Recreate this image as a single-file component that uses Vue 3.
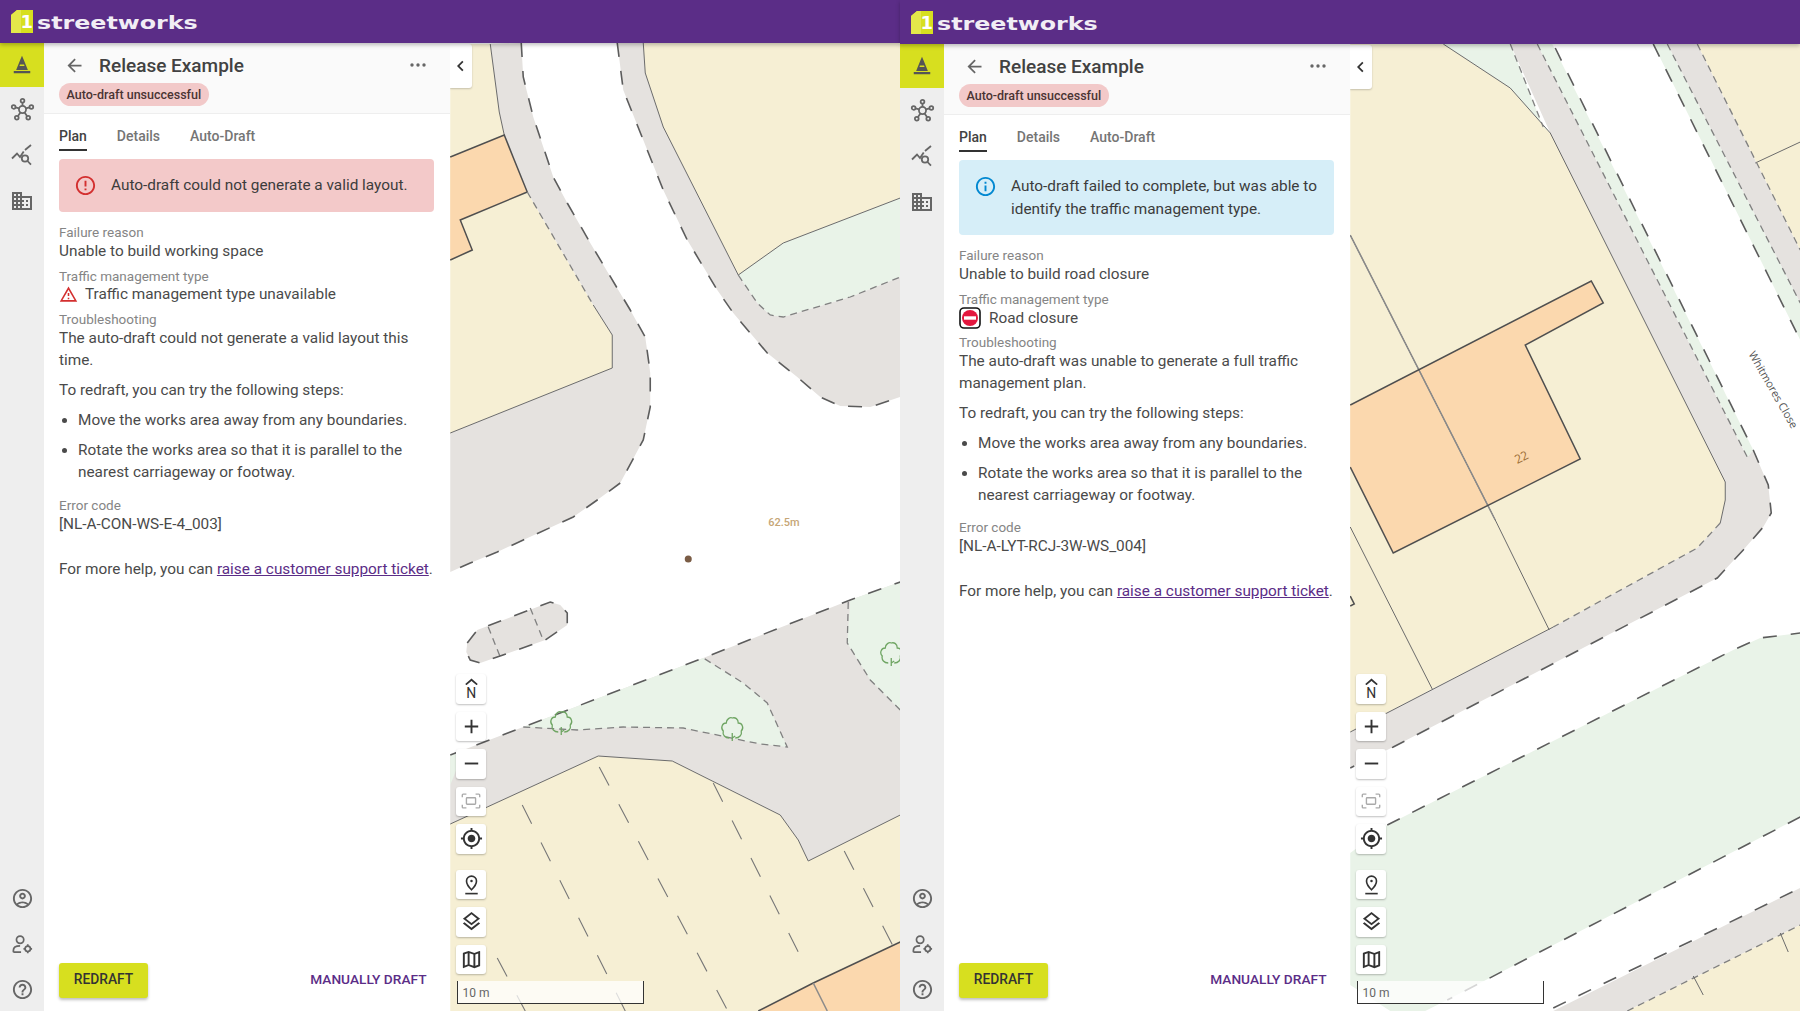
<script setup>
const LAND = 'land'
const ROAD = 'foot'
const GREEN = 'green'
const BUILDING = 'building'

const treeMarks = [[561, 723], [732, 729], [891, 654]]

const maps = {
  a: {
    viewBox: '450 43 450 968',
    fills: [
      [LAND, '450,44 490,44 499,112 504,135 514,160 527,192 593,305 612,335 612,368 450,433'],
      [BUILDING, '450,157 504,135 514,160 527,192 460,220 472,250 450,260'],
      [ROAD, '490,44 521,43 523,77 533,117 553,177 567,203 590,243 630,310 645,337 650,373 650,407 643,440 620,483 597,500 573,517 560,523 523,540 497,552 470,563 450,572 450,433 612,368 612,335 593,305 527,192 514,160 504,135 499,112'],
      [LAND, '643,43 900,43 900,198 783,243 738,275 663,127 645,73'],
      [GREEN, '738,275 783,243 900,198 900,277 850,297 783,317 770,315 757,303'],
      [ROAD, '617,43 643,43 645,73 663,127 738,275 757,303 770,315 783,317 850,297 900,277 900,397 870,407 840,406 820,397 797,377 767,353 750,333 733,313 717,290 687,240 663,190 643,140 623,90'],
      [ROAD, '467,643 477,630 550,602 560,605 567,613 567,625 545,640 480,663 470,660 466,652'],
      [ROAD, '450,755 523,727 703,658 850,600 900,582 900,815 808,861 798,840 780,815 672,761 598,756 487,807 450,824'],
      [GREEN, '450,755 464,750 450,785'],
      [GREEN, '523,727 703,658 743,683 767,703 787,747 760,744 683,728 623,727 577,730'],
      [GREEN, '850,600 900,582 900,710 870,680 847,643'],
      [LAND, '450,824 487,807 598,756 672,761 780,815 798,840 808,861 900,815 900,1011 450,1011'],
      [BUILDING, '758,1011 813,983 900,942 900,1011']
    ],
    lines: [
      ['edge', '490,44 499,112 504,135'],
      ['edge', '593,305 612,335 612,368 450,433'],
      ['edge', '643,43 645,73 663,127 738,275 783,243 900,198'],
      ['edge', '450,824 487,807 598,756 672,761 780,815 798,840 808,861 900,815'],
      ['wall', '450,157 504,135 514,160 527,192 460,220 472,250 450,260'],
      ['wall', '758,1011 813,983 900,942'],
      ['soft', '527,192 593,305'],
      ['soft', '738,275 757,303 770,315 783,317 850,297 900,277'],
      ['soft', '523,727 577,730 623,727 683,728 760,744 787,747 767,703 743,683 703,658'],
      ['soft', '848,602 847,643 870,680 900,710'],
      ['soft', '488,627 500,657'],
      ['soft', '530,608 543,640'],
      ['kerb', '521,43 523,77 533,117 553,177 567,203 590,243 630,310 645,337 650,373 650,407 643,440 620,483 597,500 573,517 560,523 523,540 497,552 470,563 450,572'],
      ['kerb', '617,43 623,90 643,140 663,190 687,240 717,290 733,313 750,333 767,353 797,377 820,397 840,406 870,407 900,397'],
      ['kerb', '467,643 477,630 550,602 560,605 567,613 567,625 545,640 480,663 470,660 466,652 467,643'],
      ['kerb', '450,755 523,727 703,658 850,600 900,582'],
      ['plot', '599,767 727,1010'],
      ['plot', '522,805 625,1011'],
      ['plot', '713,783 804,964'],
      ['plot', '844,851 900,960'],
      ['plot', '497,958 525,1011'],
      ['party', '813,983 827,1011']
    ],
    labels: [{ text: '62.5m', x: 768, y: 526, cls: 'dist' }],
    dot: [688, 559],
    trees: treeMarks
  },
  b: {
    viewBox: '1350 44 450 967',
    fills: [
      [LAND, '1350,44 1443,44 1510,88 1550,133 1725,482 1725,500 1720,523 1697,548 1553,627 1432,689 1350,732'],
      [GREEN, '1443,44 1510,44 1543,127 1550,133 1510,88'],
      [ROAD, '1510,44 1537,44 1747,457 1753,450 1768,485 1771,513 1763,527 1743,550 1717,578 1393,747 1350,768 1350,732 1432,689 1553,627 1697,548 1720,523 1725,500 1725,482 1550,133'],
      [GREEN, '1537,44 1552,44 1753,450 1747,457'],
      [GREEN, '1653,44 1667,44 1800,303 1800,340'],
      [ROAD, '1667,44 1697,44 1800,250 1800,303'],
      [LAND, '1697,44 1800,44 1800,250'],
      [BUILDING, '1350,405 1591,281 1603,303 1525,345 1580,459 1393,553 1350,467'],
      [GREEN, '1350,853 1387,825 1733,650 1760,638 1800,633 1800,817 1447,1000 1425,1011 1390,1011 1350,985'],
      [ROAD, '1553,1011 1800,888 1800,925 1627,1011'],
      [LAND, '1627,1011 1800,925 1800,1011']
    ],
    lines: [
      ['edge', '1443,44 1510,88 1550,133 1725,482 1725,500 1720,523'],
      ['edge', '1553,627 1350,732'],
      ['edge', '1755,163 1800,142'],
      ['edge', '1350,235 1495,520 1549,630'],
      ['edge', '1350,527 1432,689'],
      ['party', '1350,235 1495,520'],
      ['wall', '1350,405 1591,281 1603,303 1525,345 1580,459 1393,553 1350,467'],
      ['wall', '1350,596 1354,604 1350,606'],
      ['soft', '1510,44 1543,127'],
      ['soft', '1537,44 1747,457'],
      ['soft', '1667,44 1800,303'],
      ['soft', '1697,44 1800,250'],
      ['soft', '1720,523 1697,548 1553,627'],
      ['soft', '1627,1011 1800,925'],
      ['kerb', '1555,48 1753,450 1768,485 1771,513 1763,527 1743,550 1717,578 1393,747 1350,768'],
      ['kerb', '1653,44 1800,340'],
      ['kerb', '1387,825 1733,650 1760,638 1800,633'],
      ['kerb', '1800,817 1447,1000'],
      ['kerb', '1553,1008 1800,888'],
      ['edge', '1693,976 1703,995'],
      ['edge', '1780,933 1788,952']
    ],
    labels: [
      { text: 'Whitmores Close', x: 1748, y: 354, cls: 'street', rotate: 60 },
      { text: '22', x: 1517, y: 464, cls: 'house', rotate: -27 }
    ],
    trees: []
  }
}

const screens = [
  {
    id: 'a',
    alertKind: 'error',
    alert: 'Auto-draft could not generate a valid layout.',
    reason: 'Unable to build working space',
    tmKind: 'warning',
    tmText: 'Traffic management type unavailable',
    trouble: 'The auto-draft could not generate a valid layout this time.',
    code: '[NL-A-CON-WS-E-4_003]',
    map: maps.a
  },
  {
    id: 'b',
    alertKind: 'info',
    alert: 'Auto-draft failed to complete, but was able to identify the traffic management type.',
    reason: 'Unable to build road closure',
    tmKind: 'closure',
    tmText: 'Road closure',
    trouble: 'The auto-draft was unable to generate a full traffic management plan.',
    code: '[NL-A-LYT-RCJ-3W-WS_004]',
    map: maps.b
  }
]

const tabs = ['Plan', 'Details', 'Auto-Draft']
const steps = [
  'Move the works area away from any boundaries.',
  'Rotate the works area so that it is parallel to the nearest carriageway or footway.'
]
</script>

<template>
  <div class="page">
    <section v-for="screen in screens" :key="screen.id" class="screen" :class="'screen-' + screen.id">
      <header class="topbar">
        <div class="logo-mark">
          <svg viewBox="0 0 22 23" width="22" height="23">
            <path d="M0 23V5L6 0h16v23z" fill="#d7df1f" />
            <path d="M0 23V5L6 0h4v23z" fill="#e3e84a" />
          </svg>
          <span class="logo-one">1</span>
        </div>
        <span class="logo-text">streetworks</span>
      </header>

      <div class="body">
        <nav class="sidebar">
          <div class="nav-group">
            <div class="nav-item active">
              <svg viewBox="0 0 24 24" width="22" height="22" fill="#555">
                <path d="M3 18.5h18V21H3zM5.6 17.5 10 6.5 12 2l2 4.5 4.400 11z" />
                <path d="M9.800 11.500h4.400l.6 1.700H9.200z" fill="#d7df1f" />
              </svg>
            </div>
            <div class="nav-item">
              <svg viewBox="0 0 24 24" width="25" height="25" fill="none" stroke="#666" stroke-width="1.7">
                <circle cx="12" cy="12" r="3.4" />
                <circle cx="12" cy="3.5" r="1.8" />
                <circle cx="3.500" cy="9.5" r="1.8" />
                <circle cx="20.500" cy="9.5" r="1.8" />
                <circle cx="6.500" cy="20" r="1.8" />
                <circle cx="17.500" cy="20" r="1.8" />
                <path d="M12 5.300v3.300M5.200 10l3.600 1M18.800 10l-3.600 1M7.500 18.500l2.500-3.600M16.500 18.500 14 14.900" />
              </svg>
            </div>
            <div class="nav-item">
              <svg viewBox="0 0 24 24" width="24" height="24" fill="none" stroke="#666" stroke-width="1.8">
                <path d="M2 15.500 7 10.500l3 3.500 3.700-5.500M15 7l6-5" />
                <circle cx="15" cy="15.500" r="3.2" />
                <path d="m17.500 18 3.500 3.700" />
              </svg>
            </div>
            <div class="nav-item">
              <svg viewBox="0 0 24 24" width="24" height="24" fill="#666">
                <path d="M12 7V3H2v18h20V7H12zM6 19H4v-2h2v2zm0-4H4v-2h2v2zm0-4H4V9h2v2zm0-4H4V5h2v2zm4 12H8v-2h2v2zm0-4H8v-2h2v2zm0-4H8V9h2v2zm0-4H8V5h2v2zm10 12h-8v-2h2v-2h-2v-2h2v-2h-2V9h8v10zm-2-8h-2v2h2v-2zm0 4h-2v2h2v-2z" />
              </svg>
            </div>
          </div>
          <div class="nav-group nav-bottom">
            <div class="nav-item">
              <svg viewBox="0 0 24 24" width="23" height="23" fill="#666">
                <path d="M12 2C6.480 2 2 6.480 2 12s4.480 10 10 10 10-4.480 10-10S17.520 2 12 2zM7.350 18.500C8.660 17.560 10.260 17 12 17s3.340.56 4.650 1.500c-1.310.94-2.910 1.500-4.650 1.500s-3.340-.56-4.650-1.500zm10.790-1.380C16.450 15.800 14.320 15 12 15s-4.450.8-6.140 2.120C4.700 15.730 4 13.950 4 12c0-4.420 3.580-8 8-8s8 3.580 8 8c0 1.950-.7 3.730-1.860 5.120zM12 6c-1.930 0-3.500 1.570-3.500 3.500S10.070 13 12 13s3.500-1.570 3.500-3.500S13.930 6 12 6zm0 5c-.83 0-1.500-.67-1.500-1.500S11.170 8 12 8s1.500.67 1.500 1.500S12.830 11 12 11z" />
              </svg>
            </div>
            <div class="nav-item">
              <svg viewBox="0 0 24 24" width="23" height="23" fill="none" stroke="#666" stroke-width="1.8">
                <circle cx="9.500" cy="7" r="3.8" />
                <path d="M2.500 20v-2c0-3 3-4.500 7-4.500M2.500 20h8" />
                <circle cx="17.500" cy="16.500" r="2.8" />
                <path d="M17.500 11.800v1.900M17.500 19.300v1.900M13 16.500h1.700M20.300 16.500H22" />
              </svg>
            </div>
            <div class="nav-item">
              <svg viewBox="0 0 24 24" width="23" height="23" fill="#666">
                <path d="M11 18h2v-2h-2v2zm1-16C6.480 2 2 6.480 2 12s4.480 10 10 10 10-4.480 10-10S17.520 2 12 2zm0 18c-4.410 0-8-3.590-8-8s3.590-8 8-8 8 3.590 8 8-3.590 8-8 8zm0-14c-2.210 0-4 1.790-4 4h2c0-1.100.9-2 2-2s2 .9 2 2c0 2-3 1.750-3 5h2c0-2.250 3-2.500 3-5 0-2.210-1.790-4-4-4z" />
              </svg>
            </div>
          </div>
        </nav>

        <main class="panel">
          <div class="panel-head">
            <div class="title-row">
              <svg viewBox="0 0 24 24" width="21" height="21" fill="#666">
                <path d="M20 11H7.830l5.590-5.590L12 4l-8 8 8 8 1.410-1.410L7.830 13H20v-2z" />
              </svg>
              <h1>Release Example</h1>
              <svg class="more" viewBox="0 0 16 4" width="16" height="4" fill="#666">
                <circle cx="2" cy="2" r="1.7" />
                <circle cx="8" cy="2" r="1.7" />
                <circle cx="14" cy="2" r="1.7" />
              </svg>
            </div>
            <span class="chip">Auto-draft unsuccessful</span>
          </div>

          <div class="tabs">
            <span v-for="(tab, i) in tabs" :key="tab" class="tab" :class="{ current: i === 0 }">{{ tab }}</span>
          </div>

          <div class="content">
            <div class="alert" :class="'alert-' + screen.alertKind">
              <svg v-if="screen.alertKind === 'error'" viewBox="0 0 24 24" width="23" height="23" fill="#d32f2f">
                <path d="M11 15h2v2h-2zm0-8h2v6h-2zm.99-5C6.470 2 2 6.480 2 12s4.470 10 9.990 10C17.520 22 22 17.520 22 12S17.520 2 11.990 2zM12 20c-4.420 0-8-3.580-8-8s3.580-8 8-8 8 3.580 8 8-3.580 8-8 8z" />
              </svg>
              <svg v-else viewBox="0 0 24 24" width="23" height="23" fill="#0288d1">
                <path d="M11 7h2v2h-2zm0 4h2v6h-2zm1-9C6.480 2 2 6.480 2 12s4.480 10 10 10 10-4.480 10-10S17.520 2 12 2zm0 18c-4.410 0-8-3.590-8-8s3.590-8 8-8 8 3.590 8 8-3.590 8-8 8z" />
              </svg>
              <p>{{ screen.alert }}</p>
            </div>

            <div class="field">
              <div class="label">Failure reason</div>
              <div class="value">{{ screen.reason }}</div>
            </div>
            <div class="field">
              <div class="label">Traffic management type</div>
              <div class="value tm-row" :class="'tm-' + screen.tmKind">
                <svg v-if="screen.tmKind === 'warning'" viewBox="0 0 24 24" width="19" height="19" fill="#d32f2f">
                  <path d="M12 5.990 19.530 19H4.470L12 5.990M12 2 1 21h22L12 2zm1 14h-2v2h2v-2zm0-6h-2v4h2v-4z" />
                </svg>
                <svg v-else class="closure" viewBox="0 0 22 22" width="22" height="22">
                  <rect x="1" y="1" width="20" height="20" rx="4" fill="#fff" stroke="#111" stroke-width="1.6" />
                  <circle cx="11" cy="11" r="8" fill="#e3173e" />
                  <rect x="5" y="9.300" width="12" height="3.4" fill="#fff" />
                </svg>
                <span>{{ screen.tmText }}</span>
              </div>
            </div>
            <div class="field">
              <div class="label">Troubleshooting</div>
              <div class="value body-text trouble">{{ screen.trouble }}</div>
            </div>
            <p class="body-text redraft-intro">To redraft, you can try the following steps:</p>
            <ul class="steps">
              <li v-for="step in steps" :key="step">{{ step }}</li>
            </ul>
            <div class="field error-code">
              <div class="label">Error code</div>
              <div class="value">{{ screen.code }}</div>
            </div>
            <p class="body-text help">For more help, you can <a href="#" @click.prevent>raise a customer support ticket</a>.</p>
          </div>

          <div class="actions">
            <button class="btn-primary">REDRAFT</button>
            <button class="btn-text">MANUALLY DRAFT</button>
          </div>
        </main>

        <div class="map">
          <svg class="map-canvas" :viewBox="screen.map.viewBox">
            <polygon v-for="(f, i) in screen.map.fills" :key="'f' + i" :class="f[0]" :points="f[1]" />
            <polyline v-for="(l, i) in screen.map.lines" :key="'l' + i" :class="l[0]" :points="l[1]" />
            <g v-for="t in screen.map.trees" :key="t[0]" :transform="`translate(${t[0] - 12} ${t[1] - 13})`" class="tree">
              <path d="M9 22C5 22 2 19 3 15 0 12 2 7 6 7 6 3 10 1 12 2 15 1 18 3 18 7 22 7 24 12 21 15 22 19 19 22 15 22M12 25V17M12 22l3-2" />
            </g>
            <circle v-if="screen.map.dot" :cx="screen.map.dot[0]" :cy="screen.map.dot[1]" r="3.5" fill="#7a5c45" />
            <text
              v-for="lab in screen.map.labels"
              :key="lab.text"
              :class="lab.cls"
              :x="lab.x"
              :y="lab.y"
              :transform="lab.rotate ? `rotate(${lab.rotate} ${lab.x} ${lab.y})` : null"
            >{{ lab.text }}</text>
          </svg>

          <button class="collapse">
            <svg viewBox="0 0 24 24" width="22" height="22" fill="#333">
              <path d="M15.410 7.410 14 6l-6 6 6 6 1.410-1.410L10.830 12z" />
            </svg>
          </button>

          <div class="controls">
            <div class="ctrl-group">
              <button class="ctrl north">
                <svg viewBox="0 0 16 8" width="15" height="7" fill="none" stroke="#333" stroke-width="2"><path d="M1.500 7.500 8 2l6.500 5.500" /></svg>
                <span>N</span>
              </button>
              <button class="ctrl">
                <svg viewBox="0 0 24 24" width="23" height="23" fill="#333"><path d="M19 13h-6v6h-2v-6H5v-2h6V5h2v6h6v2z" /></svg>
              </button>
              <button class="ctrl">
                <svg viewBox="0 0 24 24" width="23" height="23" fill="#333"><path d="M19 13H5v-2h14v2z" /></svg>
              </button>
              <button class="ctrl">
                <svg viewBox="0 0 24 24" width="22" height="22" fill="none" stroke="#aaa" stroke-width="1.5">
                  <rect x="7" y="8.500" width="10" height="7" rx=".8" />
                  <path d="M2.500 8V5.500a1 1 0 0 1 1-1H7M17 4.500h3.500a1 1 0 0 1 1 1V8M21.500 16v2.500a1 1 0 0 1-1 1H17M7 19.500H3.500a1 1 0 0 1-1-1V16" />
                </svg>
              </button>
              <button class="ctrl">
                <svg viewBox="0 0 24 24" width="23" height="23" fill="#333">
                  <path d="M12 8c-2.210 0-4 1.790-4 4s1.790 4 4 4 4-1.790 4-4-1.790-4-4-4zm8.940 3c-.46-4.170-3.770-7.480-7.940-7.940V1h-2v2.060C6.830 3.520 3.520 6.830 3.060 11H1v2h2.060c.46 4.170 3.770 7.480 7.940 7.940V23h2v-2.060c4.170-.46 7.480-3.770 7.940-7.940H23v-2h-2.060zM12 19c-3.870 0-7-3.130-7-7s3.130-7 7-7 7 3.130 7 7-3.130 7-7 7z" />
                </svg>
              </button>
            </div>
            <div class="ctrl-group">
              <button class="ctrl">
                <svg viewBox="0 0 24 24" width="23" height="23" fill="none" stroke="#333" stroke-width="1.7">
                  <path d="M12 17.500S6.800 12.600 6.800 8.400a5.200 5.200 0 0 1 10.400 0c0 4.200-5.200 9.100-5.200 9.100z" />
                  <circle cx="12" cy="8.400" r="1.3" fill="#333" stroke="none" />
                  <path d="M5.500 21.500h13" />
                </svg>
              </button>
              <button class="ctrl">
                <svg viewBox="0 0 24 24" width="23" height="23" fill="#333">
                  <path d="m12 18.540-7.370-5.730L3 14.070l9 7 9-7-1.630-1.270zM12 16l7.360-5.730L21 9l-9-7-9 7 1.630 1.270L12 16zm0-11.470L17.740 9 12 13.470 6.260 9 12 4.530z" />
                </svg>
              </button>
              <button class="ctrl">
                <svg viewBox="0 0 24 24" width="23" height="23" fill="#333">
                  <path d="m20.500 3-.16.03L15 5.100 9 3 3.360 4.900c-.21.07-.36.25-.36.480V20.500c0 .28.22.5.5.5l.16-.03L9 18.900l6 2.100 5.640-1.900c.21-.07.36-.25.36-.48V3.500c0-.28-.22-.5-.5-.5zM10 5.470l4 1.400v11.660l-4-1.400V5.470zm-5 .99 3-1.010v11.700l-3 1.160V6.460zm14 11.080-3 1.010V6.860l3-1.160v11.840z" />
                </svg>
              </button>
            </div>
          </div>

          <div class="scale">10 m</div>
        </div>
      </div>
    </section>
  </div>
</template>

<style>
html, body {
  margin: 0;
  padding: 0;
  background: #fff;
}
</style>

<style scoped>
.page {
  display: grid;
  grid-template-columns: 900px 900px;
  width: 1800px;
  height: 1011px;
  overflow: hidden;
  font-family: Roboto, "Liberation Sans", sans-serif;
  color: #424242;
}
.screen {
  display: flex;
  flex-direction: column;
  height: 1011px;
  min-width: 0;
}
.topbar {
  flex: none;
  height: 43px;
  background: #5b2d87;
  display: flex;
  align-items: center;
  padding-left: 11px;
  gap: 4px;
  box-shadow: 0 2px 4px rgba(0, 0, 0, .25);
  position: relative;
  z-index: 3;
}
.screen-b .topbar {
  height: 44px;
}
.logo-mark {
  position: relative;
  width: 22px;
  height: 23px;
}
.logo-mark svg {
  display: block;
}
.logo-one {
  position: absolute;
  right: 0;
  top: 1px;
  font-family: "DejaVu Sans", sans-serif;
  font-weight: 700;
  font-size: 18px;
  line-height: 21px;
  color: #fff;
}
.logo-text {
  font-family: "DejaVu Sans", sans-serif;
  font-weight: 700;
  font-size: 18px;
  color: #f1edf5;
  transform: scaleX(1.32);
  transform-origin: left center;
  margin-top: 2px;
}
.body {
  flex: 1;
  display: flex;
  min-height: 0;
}
.sidebar {
  flex: none;
  width: 44px;
  background: #eeeeee;
  display: flex;
  flex-direction: column;
  justify-content: space-between;
}
.nav-group {
  display: flex;
  flex-direction: column;
}
.nav-item {
  height: 45.5px;
  display: flex;
  align-items: center;
  justify-content: center;
}
.nav-item.active {
  height: 44px;
  background: #d7df1f;
}
.nav-bottom {
  margin-bottom: -1.5px;
}
.panel {
  flex: none;
  width: 405.5px;
  background: #fff;
  display: flex;
  flex-direction: column;
}
.panel-head {
  height: 71px;
  box-sizing: border-box;
  background: #fafafa;
  border-bottom: 1px solid #eeeeee;
  padding: 0 15px;
}
.title-row {
  height: 36px;
  display: flex;
  align-items: center;
  padding-left: 5px;
  margin-top: 4px;
}
.title-row h1 {
  margin: 0 0 0 14px;
  font-size: 19px;
  font-weight: 500;
  color: #424242;
}
.more {
  margin-left: auto;
  margin-right: 9px;
}
.chip {
  display: inline-block;
  height: 23px;
  line-height: 23px;
  padding: 0 7.5px;
  border-radius: 12px;
  background: #f2c9c9;
  font-size: 12.5px;
  font-weight: 500;
  color: #4a3434;
}
.tabs {
  display: flex;
  gap: 30px;
  padding: 13px 15px 0;
  height: 24px;
}
.tab {
  font-size: 14px;
  font-weight: 500;
  color: #757575;
  height: 22px;
  line-height: 19px;
}
.tab.current {
  color: #424242;
  border-bottom: 2px solid #333;
}
.content {
  flex: 1;
  padding: 8px 16px 0 15px;
}
.alert {
  display: flex;
  align-items: flex-start;
  gap: 14px;
  padding: 15px 10px 15px 15px;
  border-radius: 4px;
  margin-bottom: 11px;
}
.alert svg {
  flex: none;
}
.alert p {
  margin: 0;
  font-size: 15.35px;
  line-height: 22.5px;
  color: #3c3c3c;
}
.alert-error {
  background: #f3c9c9;
}
.alert-info {
  background: #d6eef8;
}
.field {
  margin-bottom: 6px;
}
.label {
  font-size: 13.5px;
  line-height: 18px;
  color: #858585;
}
.value {
  font-size: 15.35px;
  line-height: 20px;
  color: #4a4a4a;
}
.tm-row {
  display: flex;
  align-items: center;
  gap: 7px;
}
.tm-row svg {
  flex: none;
}
.tm-warning {
  height: 18px;
  margin-bottom: 7px;
}
.tm-closure {
  height: 22px;
  gap: 6px;
  margin: -1px 0 -2px;
}
.closure {
  margin-right: 2px;
}
.body-text {
  font-size: 15.35px;
  line-height: 22px;
  color: #4a4a4a;
}
.trouble {
  margin-top: -1px;
}
.redraft-intro {
  margin: 8px 0;
}
.steps {
  margin: 0;
  padding: 0 0 0 19px;
  font-size: 15.35px;
  line-height: 22px;
  color: #4a4a4a;
}
.steps li {
  margin-bottom: 8px;
}
.error-code {
  margin-top: 13px;
}
.screen-b .error-code {
  margin-top: 12px;
}
.help {
  margin: 24px 0 0;
  white-space: nowrap;
}
.help a {
  color: #5b2d87;
}
.actions {
  display: flex;
  justify-content: space-between;
  align-items: center;
  padding: 0 23px 13px 15px;
}
.btn-primary {
  width: 89px;
  height: 35px;
  border: 0;
  border-radius: 3px;
  padding: 0 0 3px;
  background: #d7df1f;
  color: #333;
  font: 500 13.8px Roboto, sans-serif;
  box-shadow: 0 2px 3px rgba(0, 0, 0, .25);
}
.btn-text {
  border: 0;
  padding: 0 0 3px;
  background: none;
  color: #5b2d87;
  font: 500 13.7px Roboto, sans-serif;
}
.map {
  flex: 1;
  position: relative;
  overflow: hidden;
  background: #fff;
}
.map-canvas {
  display: block;
  width: 100%;
  height: 100%;
}
.land {
  fill: #f6efd4;
}
.foot {
  fill: #e5e2df;
}
.green {
  fill: #e9f3e8;
}
.building {
  fill: #fbd8ae;
}
.edge,
.wall,
.soft,
.kerb,
.plot,
.party {
  fill: none;
}
.edge {
  stroke: #6b6b6b;
  stroke-width: 1;
}
.wall {
  stroke: #4f4f4f;
  stroke-width: 1.5;
}
.soft {
  stroke: #808080;
  stroke-width: 1.3;
  stroke-dasharray: 7 5;
}
.kerb {
  stroke: #5c5c5c;
  stroke-width: 1.6;
  stroke-dasharray: 14 14;
}
.plot {
  stroke: #777;
  stroke-width: 1.1;
  stroke-dasharray: 21 21;
}
.party {
  stroke: #8a8a8a;
  stroke-width: 1.5;
}
.tree path {
  fill: none;
  stroke: #6fa563;
  stroke-width: 1.3;
}
.dist {
  font: 500 11px Roboto, sans-serif;
  fill: #c6a676;
}
.street {
  font: 500 11px "Open Sans", sans-serif;
  fill: #555;
}
.house {
  font: 400 12px "Open Sans", sans-serif;
  fill: #9a6a30;
}
.collapse {
  position: absolute;
  left: 0;
  top: 1px;
  width: 22px;
  height: 44px;
  border: 0;
  padding: 0 1px 0 0;
  background: #fff;
  border-radius: 0 3px 3px 0;
  box-shadow: 0 1px 2px rgba(0, 0, 0, .2);
  display: flex;
  align-items: center;
  justify-content: center;
}
.controls {
  position: absolute;
  left: 6.8px;
  bottom: 37px;
  display: flex;
  flex-direction: column;
  gap: 16px;
}
.ctrl-group {
  display: flex;
  flex-direction: column;
  gap: 8px;
}
.ctrl {
  width: 30px;
  height: 29.5px;
  padding: 0;
  border: 0;
  border-radius: 3px;
  background: #fff;
  box-shadow: 0 1px 2px rgba(0, 0, 0, .25);
  display: flex;
  align-items: center;
  justify-content: center;
}
.north {
  flex-direction: column;
  gap: 2px;
  font: 400 14px/12px Roboto, sans-serif;
  color: #333;
}
.scale {
  position: absolute;
  left: 7px;
  bottom: 7px;
  width: 187px;
  height: 23px;
  box-sizing: border-box;
  border: solid #333;
  border-width: 0 1.5px 1.5px;
  background: rgba(255, 255, 255, .75);
  font-size: 12px;
  line-height: 24px;
  padding-left: 5px;
  color: #666;
}
</style>
